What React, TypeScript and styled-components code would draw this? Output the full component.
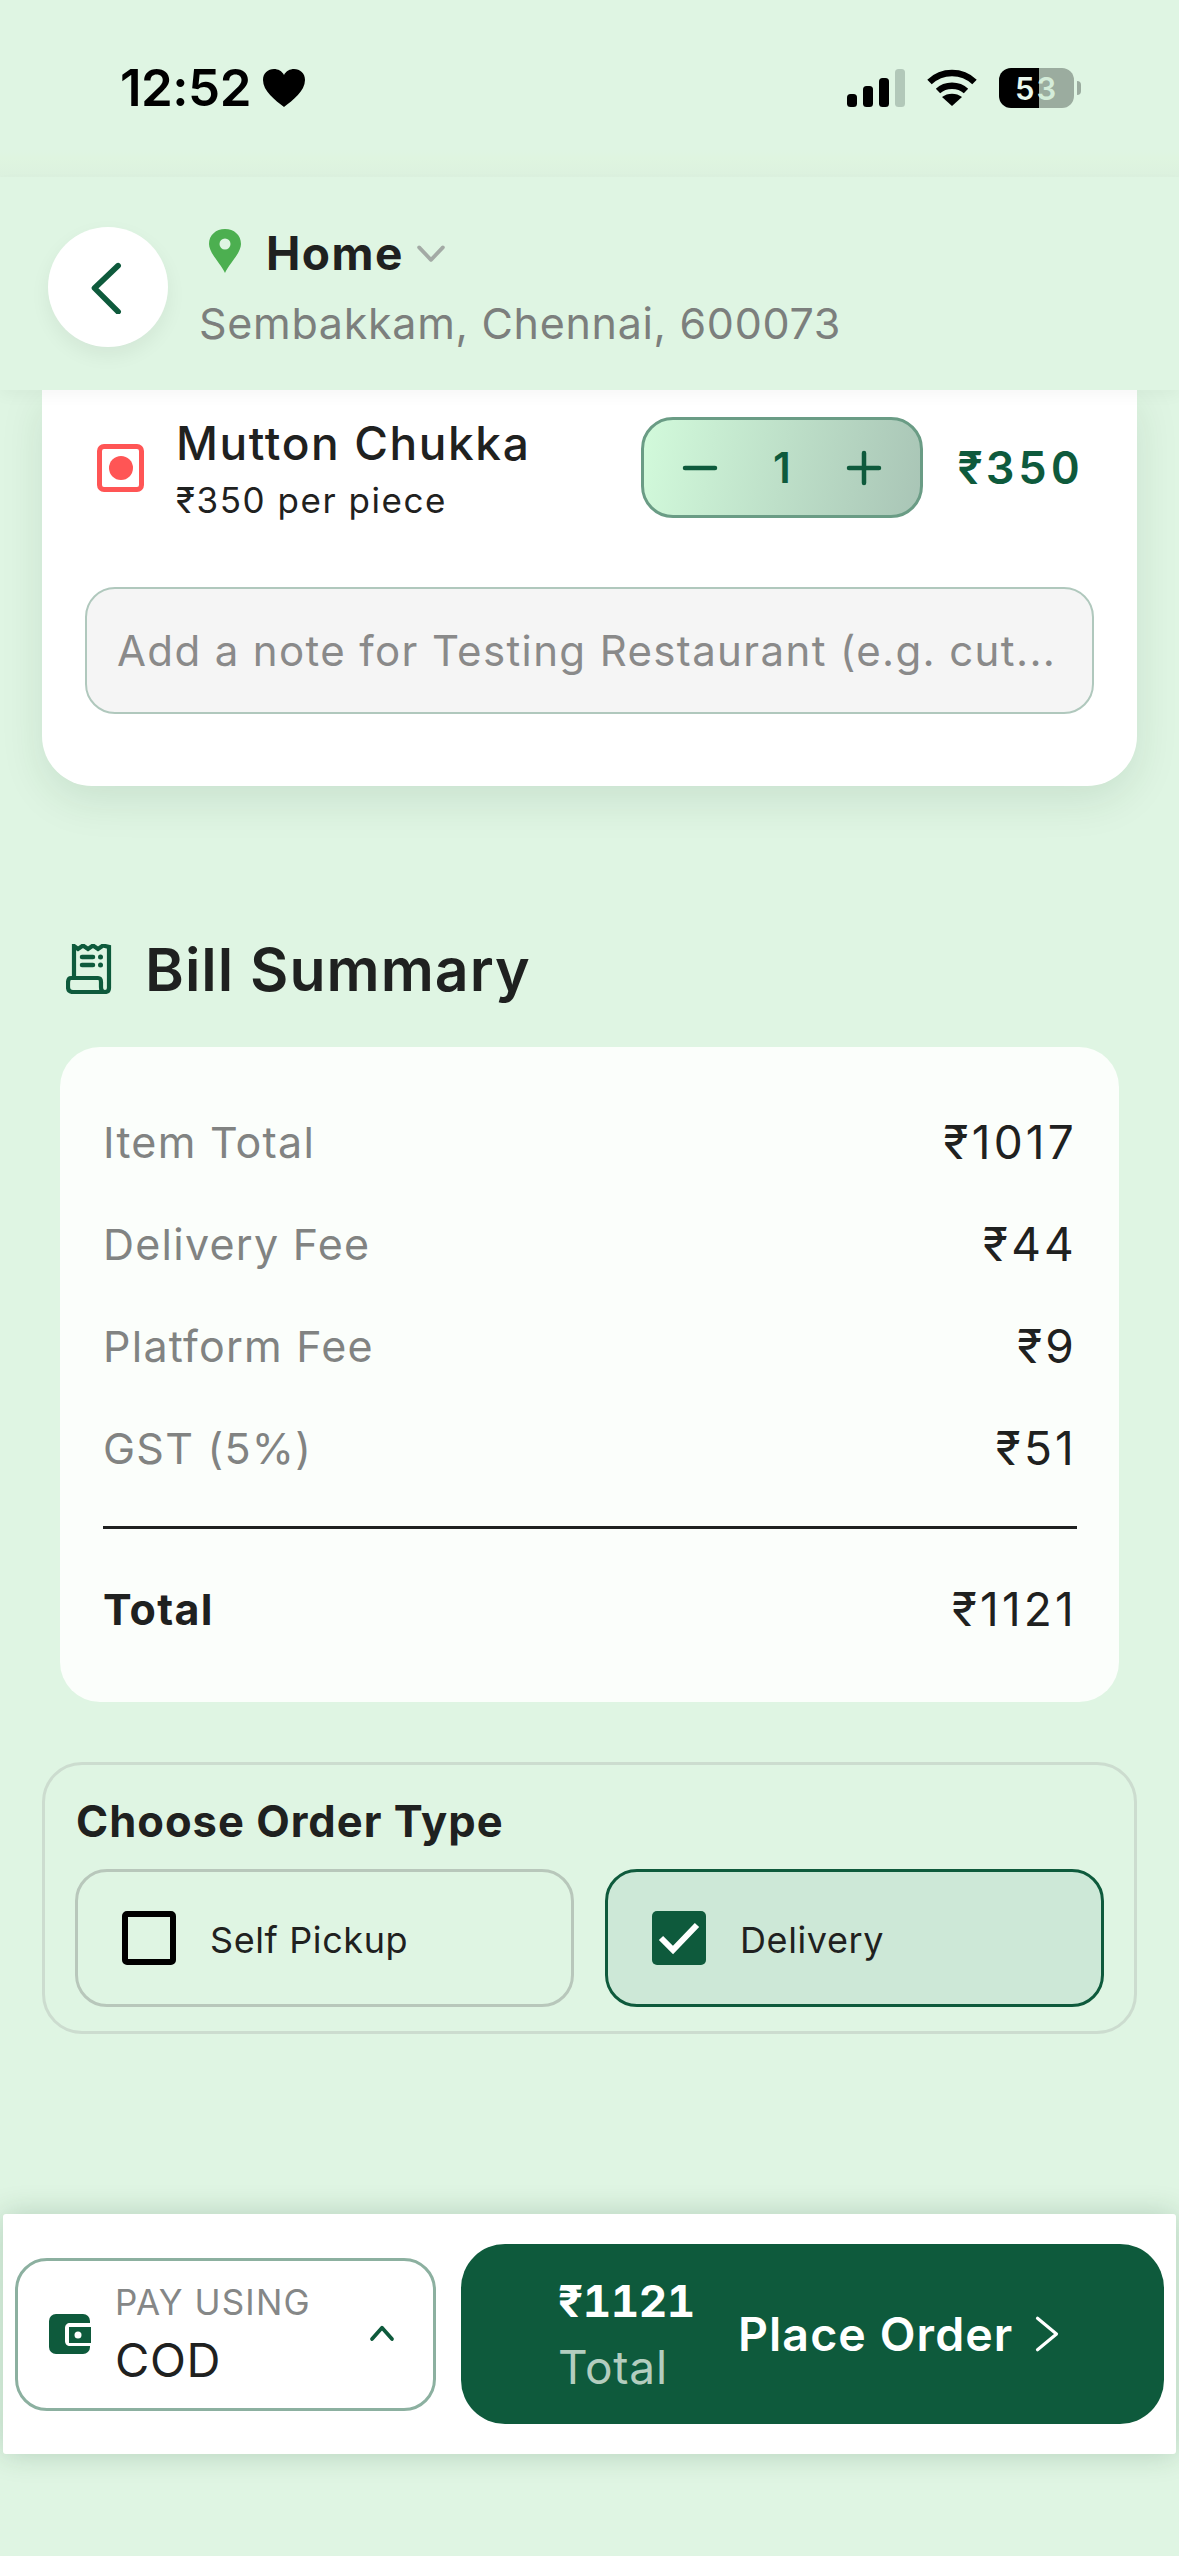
import { createGlobalStyle } from "styled-components";
import styled from "styled-components";

const GlobalStyle = createGlobalStyle`
  html, body {
    margin: 0;
    padding: 0;
    background: #dff5e3;
    font-family: "Inter", "Liberation Sans", sans-serif;
    color: #1e1e1e;
  }
`;

const Page = styled.div`
  width: 1179px;
  height: 2556px;
  display: flex;
  flex-direction: column;
  background: #dff5e3;
  overflow: hidden;
`;

const StatusBar = styled.div`
  height: 177px;
  display: flex;
  justify-content: space-between;
  align-items: flex-start;
  padding: 59px 105px 0 120px;
  box-sizing: border-box;
  background: linear-gradient(180deg, transparent 0 150px, #dff5e0 158px, #dcf1df 177px);
`;

const Clock = styled.div`
  display: flex;
  align-items: center;
  gap: 12px;
  font-size: 51px;
  line-height: 58px;
  font-weight: 600;
  letter-spacing: -0.5px;
  color: #000;
`;

const StatusIcons = styled.div`
  display: flex;
  align-items: center;
  gap: 22px;
  height: 58px;
`;

const Battery = styled.div`
  width: 75px;
  height: 40px;
  border-radius: 12px;
  background: linear-gradient(90deg, #000 0 53%, #9bac9f 53% 100%);
  display: flex;
  align-items: center;
  justify-content: center;
  font-size: 31px;
  font-weight: 600;
  letter-spacing: 2px;
  position: relative;
  &::after {
    content: "";
    position: absolute;
    right: -7px;
    top: 13px;
    width: 4px;
    height: 14px;
    border-radius: 0 7px 7px 0;
    background: #9bac9f;
  }
`;

const BatteryDigit = styled.span<{ $dim?: boolean }>`
  color: ${(p) => (p.$dim ? "#d4ecd9" : "#e9f7ec")};
`;

const Header = styled.div`
  height: 213px;
  flex-shrink: 0;
  display: flex;
  align-items: center;
  gap: 32px;
  padding: 7px 0 0 48px;
  box-sizing: border-box;
  background: #dff5e3;
  box-shadow: 0 6px 14px rgba(0, 0, 0, 0.035);
  position: relative;
  z-index: 2;
`;

const BackButton = styled.button`
  width: 120px;
  height: 120px;
  padding: 0;
  border: none;
  border-radius: 50%;
  background: #fff;
  box-shadow: 0 8px 20px rgba(0, 0, 0, 0.06);
  display: flex;
  align-items: center;
  justify-content: center;
`;

const Address = styled.div`
  display: flex;
  flex-direction: column;
  gap: 21px;
  margin-top: 4px;
`;

const AddressTop = styled.div`
  display: flex;
  align-items: center;
  padding-left: 9px;
  height: 46px;
  svg:first-child {
    margin-bottom: 4px;
  }
`;

const AddressName = styled.span`
  font-size: 46px;
  font-weight: 700;
  letter-spacing: 1.5px;
  color: #1f2120;
  margin: 0 12px 0 25px;
`;

const AddressLine = styled.div`
  font-size: 43px;
  line-height: 52px;
  letter-spacing: 0.7px;
  color: #7c7f7d;
  margin-left: -1px;
`;

const Main = styled.div`
  flex: 1;
  display: flex;
  flex-direction: column;
  padding: 0 42px;
`;

const OrderCard = styled.div`
  background: #fff;
  height: 396px;
  flex-shrink: 0;
  border-radius: 0 0 50px 50px;
  box-shadow: 0 14px 44px rgba(0, 60, 30, 0.1);
  padding: 27px 43px 0 43px;
  box-sizing: border-box;
  display: flex;
  flex-direction: column;
`;

const ItemRow = styled.div`
  display: flex;
  align-items: center;
  height: 101px;
  margin-right: 11px;
`;

const VegMark = styled.div`
  width: 47px;
  height: 48px;
  box-sizing: border-box;
  border: 5px solid #ff5555;
  border-radius: 7px;
  margin: 0 32px 0 12px;
  display: flex;
  align-items: center;
  justify-content: center;
  &::before {
    content: "";
    width: 24px;
    height: 24px;
    border-radius: 50%;
    background: #ff5555;
  }
`;

const ItemText = styled.div`
  flex: 1;
  display: flex;
  flex-direction: column;
  gap: 8px;
  margin-top: 3px;
`;

const ItemName = styled.div`
  font-size: 46px;
  line-height: 53px;
  font-weight: 500;
  letter-spacing: 1.6px;
  color: #1f2120;
`;

const ItemUnit = styled.div`
  font-size: 35px;
  line-height: 44px;
  letter-spacing: 1.55px;
  color: #1f2120;
`;

const Stepper = styled.div`
  width: 282px;
  height: 101px;
  box-sizing: border-box;
  border: 3.5px solid #6a9c85;
  border-radius: 32px;
  background: linear-gradient(100deg, #d2fadb 0%, #a9c5b6 100%);
  display: flex;
  align-items: center;
  justify-content: space-between;
  padding: 0 38px;
  color: #0e5a3c;
`;

const StepCount = styled.span`
  font-size: 42px;
  font-weight: 600;
`;

const ItemPrice = styled.div`
  width: 132px;
  margin-left: 28px;
  text-align: right;
  font-size: 45px;
  font-weight: 600;
  letter-spacing: 3.2px;
  font-variant-numeric: tabular-nums;
  color: #0e5a3c;
`;

const NoteBox = styled.div`
  margin-top: 69px;
  height: 127px;
  box-sizing: border-box;
  border: 2.5px solid #b0c8bd;
  border-radius: 30px;
  background: #f5f5f5;
  display: flex;
  align-items: center;
  padding: 0 30px;
  font-size: 42px;
  letter-spacing: 1.37px;
  color: #8a8a8a;
  white-space: nowrap;
  overflow: hidden;
`;

const BillHeading = styled.div`
  display: flex;
  align-items: center;
  gap: 33px;
  margin: 150px 0 0 24px;
  height: 66px;
  font-size: 59px;
  font-weight: 600;
  letter-spacing: 1px;
  color: #1f2120;
`;

const BillCard = styled.div`
  margin: 45px 18px 0;
  height: 655px;
  box-sizing: border-box;
  background: #fbfefb;
  border-radius: 40px;
  padding: 44px 42px 0 43px;
`;

const BillRow = styled.div`
  display: flex;
  justify-content: space-between;
  align-items: center;
  height: 102px;
`;

const BillLabel = styled.span<{ $strong?: boolean }>`
  font-size: 43px;
  letter-spacing: 1.25px;
  font-weight: ${(p) => (p.$strong ? 700 : 400)};
  color: ${(p) => (p.$strong ? "#1f2120" : "#818382")};
`;

const BillValue = styled.span`
  font-size: 46px;
  letter-spacing: 3.2px;
  color: #1f2120;
`;

const BillDivider = styled.div`
  height: 3px;
  background: #1f2120;
  margin: 27px 0 29px;
`;

const OrderType = styled.div`
  margin-top: 60px;
  height: 272px;
  box-sizing: border-box;
  border: 3px solid #ccdccf;
  border-radius: 40px;
  padding: 31px 30px 0 30px;
`;

const OrderTypeTitle = styled.div`
  font-size: 43.5px;
  line-height: 50px;
  font-weight: 700;
  letter-spacing: 1px;
  color: #1f2120;
  margin-left: 1px;
`;

const OrderOptions = styled.div`
  display: grid;
  grid-template-columns: 1fr 1fr;
  gap: 31px;
  margin-top: 23px;
`;

const OrderOption = styled.div<{ $active?: boolean }>`
  height: 138px;
  box-sizing: border-box;
  border: 3px solid ${(p) => (p.$active ? "#0e5a3c" : "#b8c7bb")};
  border-radius: 32px;
  background: ${(p) => (p.$active ? "#cde8d7" : "transparent")};
  display: flex;
  align-items: center;
  padding: 0 44px;
  gap: 34px;
  font-size: 36px;
  line-height: 44px;
  letter-spacing: 0.6px;
  color: #1f2120;
`;

const OptionLabel = styled.span`
  position: relative;
  top: 2px;
`;

const CheckBox = styled.div<{ $checked?: boolean }>`
  width: 54px;
  height: 54px;
  box-sizing: border-box;
  border: ${(p) => (p.$checked ? "none" : "6px solid #000")};
  border-radius: 5px;
  background: ${(p) => (p.$checked ? "#0e5a3c" : "transparent")};
  display: flex;
  align-items: center;
  justify-content: center;
`;

const BottomBar = styled.div`
  margin: 0 3px 102px;
  height: 240px;
  flex-shrink: 0;
  box-sizing: border-box;
  background: #fff;
  box-shadow: 0 0 30px rgba(0, 60, 30, 0.2);
  display: flex;
  align-items: center;
  padding: 0 12px 0 12px;
  gap: 25px;
  border-radius: 3px;
`;

const PayBox = styled.div`
  width: 421px;
  height: 153px;
  flex-shrink: 0;
  box-sizing: border-box;
  border: 3px solid #8cb0a0;
  border-radius: 32px;
  display: flex;
  align-items: center;
  padding: 0 36px 0 31px;
  gap: 24px;
`;

const PayText = styled.div`
  flex: 1;
  display: flex;
  flex-direction: column;
  gap: 10px;
`;

const PayLabel = styled.div`
  font-size: 35px;
  line-height: 42px;
  letter-spacing: 1.15px;
  color: #858787;
`;

const PayValue = styled.div`
  font-size: 47px;
  line-height: 54px;
  letter-spacing: 0.6px;
  color: #1f2120;
`;

const PlaceButton = styled.button`
  flex: 1;
  height: 180px;
  border: none;
  border-radius: 44px;
  background: #0e5a3c;
  display: flex;
  align-items: center;
  padding: 0 0 0 97px;
  font-family: inherit;
  color: #fff;
  text-align: left;
`;

const TotalBlock = styled.div`
  width: 180px;
  display: flex;
  flex-direction: column;
  gap: 16px;
`;

const TotalAmount = styled.div`
  font-size: 44px;
  line-height: 50px;
  font-weight: 700;
  letter-spacing: -0.4px;
  font-variant-numeric: tabular-nums;
`;

const TotalLabel = styled.div`
  font-size: 46px;
  line-height: 50px;
  letter-spacing: 0.8px;
  color: #b3cdbf;
`;

const PlaceLabel = styled.span`
  font-size: 46.5px;
  font-weight: 600;
  letter-spacing: 1.1px;
  margin-right: 15px;
`;

const Heart = () => (
  <svg width="42" height="38" viewBox="0 0 42 38">
    <path d="M21 38 C12 31 0 22 0 11 C0 4 5 0 11 0 C15 0 19 2 21 6 C23 2 27 0 31 0 C37 0 42 4 42 11 C42 22 30 31 21 38Z" fill="#000" />
  </svg>
);

const Signal = () => (
  <svg width="58" height="38" viewBox="0 0 58 38">
    <rect x="0" y="25" width="10" height="13" rx="3.5" fill="#000" />
    <rect x="16" y="17" width="10" height="21" rx="3.5" fill="#000" />
    <rect x="32" y="9" width="10" height="29" rx="3.5" fill="#000" />
    <rect x="48" y="0" width="10" height="38" rx="3.5" fill="#b2c8b9" />
  </svg>
);

const Wifi = () => (
  <svg width="50" height="38" viewBox="0 0 50 38" fill="none" stroke="#000" strokeWidth="6.4">
    <path d="M2.5 13 C15 1 35 1 47.5 13" />
    <path d="M11 22 C18.5 15 31.5 15 39 22" />
    <path d="M25 37 L15 28 C20.5 23.5 29.5 23.5 35 28Z" fill="#000" stroke="none" />
  </svg>
);

const Chevron = ({ d, size, color, w = 5 }: { d: string; size: number; color: string; w?: number }) => (
  <svg width={size} height={size} viewBox="0 0 48 48" fill="none" stroke={color} strokeWidth={w} strokeLinecap="round" strokeLinejoin="round">
    <path d={d} />
  </svg>
);

const Pin = () => (
  <svg width="32" height="44" viewBox="0 0 32 44">
    <path d="M16 44 C12 35 0 24 0 15 C0 6 7 0 16 0 C25 0 32 6 32 15 C32 24 20 35 16 44Z" fill="#4caf50" />
    <circle cx="16" cy="15" r="5.5" fill="#dff5e3" />
  </svg>
);

const Receipt = () => (
  <svg width="46" height="50" viewBox="0 0 46 50" fill="none" stroke="#0e5a3c" strokeWidth="4.2">
    <path d="M8 34 V2 L12 5 L17 1.5 L22 5 L27 1.5 L32 5 L37 1.5 L43 3 V44 C43 47 41 48 39 48 C36 48 35 46 35 43 V38 C35 35 34 34 32 34 H5 C2.5 34 2 36 2 39 V43 C2 46 3.5 48 7 48 H39" />
    <path d="M16 13 H27 M16 21 H27" strokeWidth="4.5" strokeLinecap="round" />
    <circle cx="34.500" cy="13" r="2.500" fill="#0e5a3c" stroke="none" />
    <circle cx="34.500" cy="21" r="2.500" fill="#0e5a3c" stroke="none" />
  </svg>
);

const Wallet = () => (
  <svg width="42" height="40" viewBox="0 0 42 40">
    <rect x="0" y="0" width="41" height="40" rx="7" fill="#0e5a3c" />
    <path d="M21 9 H42 V32 H21 C18 32 16 30 16 27 V14 C16 11 18 9 21 9Z" fill="#fff" />
    <rect x="20" y="13" width="22" height="16" fill="#0e5a3c" />
    <circle cx="29" cy="21" r="3.500" fill="#fff" />
  </svg>
);

const Tick = () => (
  <svg width="42" height="34" viewBox="0 0 42 34" fill="none" stroke="#fff" strokeWidth="6">
    <path d="M3 17 L15 29 L39 4" />
  </svg>
);

const bill = [
  { label: "Item Total", value: "₹1017" },
  { label: "Delivery Fee", value: "₹44" },
  { label: "Platform Fee", value: "₹9" },
  { label: "GST (5%)", value: "₹51" },
];

function App() {
  return (
    <Page>
      <GlobalStyle />
      <StatusBar>
        <Clock>
          12:52 <Heart />
        </Clock>
        <StatusIcons>
          <Signal />
          <Wifi />
          <Battery>
            <BatteryDigit>5</BatteryDigit>
            <BatteryDigit $dim>3</BatteryDigit>
          </Battery>
        </StatusIcons>
      </StatusBar>

      <Header>
        <BackButton>
          <Chevron d="M33 5 L12 25 L33 46" size={54} color="#0e5a3c" w={5} />
        </BackButton>
        <Address>
          <AddressTop>
            <Pin />
            <AddressName>Home</AddressName>
            <Chevron d="M5 15 L24 35 L43 15" size={30} color="#a3aaa5" w={6} />
          </AddressTop>
          <AddressLine>Sembakkam, Chennai, 600073</AddressLine>
        </Address>
      </Header>

      <Main>
        <OrderCard>
          <ItemRow>
            <VegMark />
            <ItemText>
              <ItemName>Mutton Chukka</ItemName>
              <ItemUnit>₹350 per piece</ItemUnit>
            </ItemText>
            <Stepper>
              <Chevron d="M4 24 H44" size={36} color="#0e5a3c" w={6} />
              <StepCount>1</StepCount>
              <Chevron d="M24 4 V44 M4 24 H44" size={36} color="#0e5a3c" w={6} />
            </Stepper>
            <ItemPrice>₹350</ItemPrice>
          </ItemRow>
          <NoteBox>Add a note for Testing Restaurant (e.g. cut...</NoteBox>
        </OrderCard>

        <BillHeading>
          <Receipt />
          Bill Summary
        </BillHeading>

        <BillCard>
          {bill.map((row) => (
            <BillRow key={row.label}>
              <BillLabel>{row.label}</BillLabel>
              <BillValue>{row.value}</BillValue>
            </BillRow>
          ))}
          <BillDivider />
          <BillRow>
            <BillLabel $strong>Total</BillLabel>
            <BillValue>₹1121</BillValue>
          </BillRow>
        </BillCard>

        <OrderType>
          <OrderTypeTitle>Choose Order Type</OrderTypeTitle>
          <OrderOptions>
            <OrderOption>
              <CheckBox />
              <OptionLabel>Self Pickup</OptionLabel>
            </OrderOption>
            <OrderOption $active>
              <CheckBox $checked>
                <Tick />
              </CheckBox>
              <OptionLabel>Delivery</OptionLabel>
            </OrderOption>
          </OrderOptions>
        </OrderType>
      </Main>

      <BottomBar>
        <PayBox>
          <Wallet />
          <PayText>
            <PayLabel>PAY USING</PayLabel>
            <PayValue>COD</PayValue>
          </PayText>
          <Chevron d="M8 32 L24 14 L40 32" size={30} color="#0e5a3c" w={6} />
        </PayBox>
        <PlaceButton>
          <TotalBlock>
            <TotalAmount>₹1121</TotalAmount>
            <TotalLabel>Total</TotalLabel>
          </TotalBlock>
          <PlaceLabel>Place Order</PlaceLabel>
          <Chevron d="M12 4 L36 24 L12 44" size={38} color="#fff" w={4} />
        </PlaceButton>
      </BottomBar>
    </Page>
  );
}

export default App;
